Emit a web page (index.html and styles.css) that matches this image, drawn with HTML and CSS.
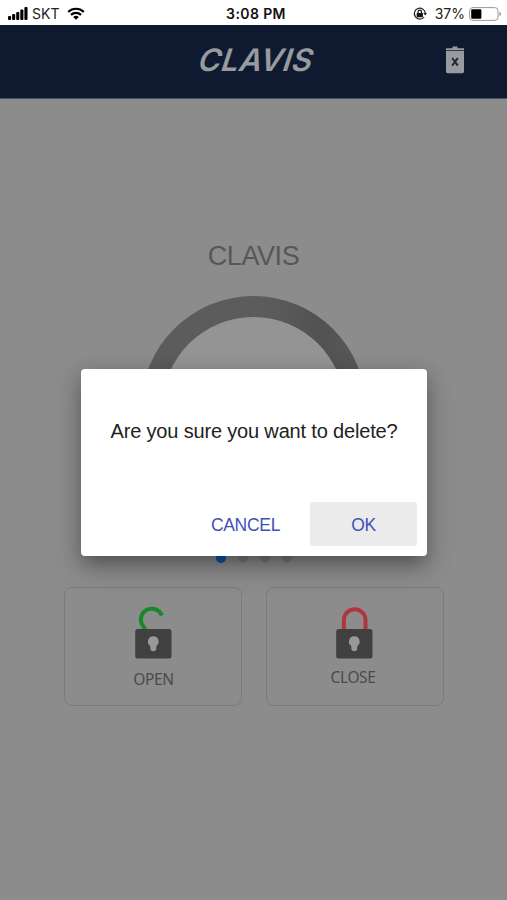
FILE: index.html
```
<!DOCTYPE html>
<html lang="en">
<head>
    <meta charset="UTF-8">
    <meta name="viewport" content="width=device-width, initial-scale=1.0">
    <title>CLAVIS</title>
    <link rel="stylesheet" href="styles.css">
</head>
<body>
    <!-- Status bar -->
    <div class="status">
        <div class="status-left">
            <svg width="20" height="13" viewBox="0 0 20 13">
                <rect x="0" y="9" width="3.1" height="4" rx="1"/>
                <rect x="4.1" y="7" width="3.1" height="6" rx="1"/>
                <rect x="8.2" y="5" width="3.1" height="8" rx="1"/>
                <rect x="12.3" y="2.5" width="3.1" height="10.5" rx="1"/>
                <rect x="16.4" y="0" width="3.1" height="13" rx="1"/>
            </svg>
            <span class="carrier">SKT</span>
            <svg width="18" height="13" viewBox="0 0 18 13">
                <path d="M1.2 4.9a11.2 11.2 0 0 1 15.6 0M4 7.9a7.2 7.2 0 0 1 10 0" fill="none" stroke="#000" stroke-width="2.2"/>
                <path d="M9 12.8L6.2 10a4 4 0 0 1 5.6 0z"/>
            </svg>
        </div>
        <div class="time">3:08 PM</div>
        <div class="status-right">
            <svg width="14" height="14" viewBox="0 0 14 14">
                <path d="M11.2 10A5.5 5.5 0 1 1 12.3 6" fill="none" stroke="#222" stroke-width="1.2"/>
                <path d="M10.2 6h3.8l-1.8 2.6z" fill="#222"/>
                <rect x="3.7" y="6" width="6.2" height="4.3" rx=".5" fill="#111"/>
                <path d="M5.1 6V4.8a1.7 1.7 0 0 1 3.4 0V6" fill="none" stroke="#111" stroke-width="1.2"/>
            </svg>
            <span class="percent">37%</span>
            <svg width="33" height="14" viewBox="0 0 33 14">
                <rect x=".6" y=".6" width="28.4" height="12.8" rx="3.2" fill="none" stroke="#999" stroke-width="1"/>
                <rect x="2.2" y="2.2" width="10.2" height="9.6" rx="1.2"/>
                <path d="M30.4 4.8q1.6.6 1.6 2.2t-1.6 2.2z" fill="#999"/>
            </svg>
        </div>
    </div>

    <header class="header">
        <span class="logo">CLAVIS</span>
        <svg class="trash" width="20" height="28" viewBox="0 0 20 28">
            <path d="M7.5 2.2V.5h5v1.7H19v2.1H1V2.2z" fill="#979a9e"/>
            <path d="M1 4.9h18v20.7a1.6 1.6 0 0 1-1.6 1.6H2.6A1.6 1.6 0 0 1 1 25.6z" fill="#979a9e"/>
            <path d="M7.2 12l5.6 7.6M12.8 12l-5.6 7.6" stroke="#222832" stroke-width="2"/>
        </svg>
    </header>

    <main class="content">
        <h1 class="device">CLAVIS</h1>
        <div class="ring"></div>
        <div class="dots">
            <span class="dot active"></span>
            <span class="dot"></span>
            <span class="dot"></span>
            <span class="dot"></span>
        </div>
        <div class="cards">
            <div class="card open">
                <svg width="38" height="54" viewBox="0 0 38 54">
                    <path d="M12.2 26L7.6 18.6A10.8 10.8 0 1 1 27.9 10.6" fill="none" stroke="#17882c" stroke-width="4"/>
                    <rect x="1.2" y="24" width="36.3" height="29.5" rx="2.5" fill="#404040"/>
                    <path d="M19.3 31.3a5.3 5.3 0 0 1 3 9.7v2.3a3 3 0 0 1-6 0V41a5.3 5.3 0 0 1 3-9.7z" fill="#999"/>
                </svg>
                <span class="label">OPEN</span>
            </div>
            <div class="card close">
                <svg width="38" height="54" viewBox="0 0 38 54">
                    <path d="M7.9 25V15a10.8 10.8 0 0 1 21.6 0V25" fill="none" stroke="#b0353f" stroke-width="4"/>
                    <rect x=".2" y="24" width="36.3" height="29.5" rx="2.5" fill="#404040"/>
                    <path d="M18.3 31.3a5.3 5.3 0 0 1 3 9.7v2.3a3 3 0 0 1-6 0V41a5.3 5.3 0 0 1 3-9.7z" fill="#999"/>
                </svg>
                <span class="label">CLOSE</span>
            </div>
        </div>
    </main>

    <!-- Confirm dialog -->
    <div class="dialog">
        <p class="message">Are you sure you want to delete?</p>
        <div class="actions">
            <button class="btn">CANCEL</button>
            <button class="btn ok">OK</button>
        </div>
    </div>
</body>
</html>
```

FILE: styles.css
```
* {
    box-sizing: border-box;
}

body {
    margin: 0;
    height: 900px;
    overflow: hidden;
    position: relative;
    font-family: "Liberation Sans", Arial, sans-serif;
    background: #8c8c8c;
}

svg {
    display: block;
    flex: none;
    overflow: visible;
}

.status {
    display: flex;
    align-items: center;
    height: 25px;
    padding: 2px 5px 0 8px;
    background: #fff;
    font-family: Inter, sans-serif;
    font-size: 14px;
    color: #222;
}

.status-left,
.status-right {
    display: flex;
    flex: 1;
    align-items: center;
}

.status-right {
    justify-content: flex-end;
}

.carrier {
    margin: 0 8px 0 4px;
}

.time {
    padding-left: 2px;
    font-weight: 600;
    letter-spacing: 0.4px;
    color: #111;
}

.percent {
    margin: 0 4px 0 8px;
}

.header {
    display: grid;
    grid-template-columns: 1fr auto 1fr;
    align-items: center;
    height: 74px;
    padding: 0 42px 4px 48px;
    background: #0f1930;
    border-bottom: 1px solid #4a505f;
}

.logo {
    grid-column: 2;
    font-family: Inter, sans-serif;
    font-size: 31px;
    font-weight: 600;
    font-style: italic;
    line-height: 36px;
    letter-spacing: 0.4px;
    color: #979a9e;
    transform: skewX(-9deg);
}

.trash {
    justify-self: end;
}

.content {
    display: flex;
    flex-direction: column;
    align-items: center;
}

.device {
    margin: 141px 0 0;
    font-size: 27px;
    font-weight: normal;
    line-height: 32px;
    letter-spacing: -0.4px;
    color: #575757;
}

/* inner disc on the padding box, ring shading on the border box */
.ring {
    width: 225px;
    height: 225px;
    margin-top: 24px;
    border: 21px solid transparent;
    border-radius: 50%;
    background:
        linear-gradient(#949494, #949494) padding-box,
        linear-gradient(90deg, #5c5c5c 55%, #525252 80%, #5a5a5a) border-box;
}

.dots {
    display: flex;
    gap: 12px;
    margin-top: 32px;
}

.dot {
    width: 10px;
    height: 10px;
    border-radius: 50%;
    background: #7c7c7c;
}

.dot.active {
    background: #0857a8;
}

.cards {
    display: flex;
    gap: 24px;
    margin-top: 24px;
}

.card {
    display: flex;
    flex-direction: column;
    align-items: center;
    width: 178px;
    height: 119px;
    padding-top: 17px;
    border: 1.5px solid #7b7b7b;
    border-radius: 8px;
}

.label {
    font-family: "Noto Sans", sans-serif;
    font-size: 15.5px;
    line-height: 22px;
    letter-spacing: -0.4px;
    color: #4a4a4a;
}

.open .label {
    margin: 9px 0 0 2px;
}

.close .label {
    margin: 7px 3px 0 0;
}

.dialog {
    position: absolute;
    left: 81px;
    top: 369px;
    display: flex;
    flex-direction: column;
    justify-content: space-between;
    width: 346px;
    height: 187px;
    padding: 50px 10px 10px;
    border-radius: 4px;
    background: #fff;
    box-shadow: 0 11px 15px -7px rgba(0, 0, 0, 0.2), 0 12px 28px 3px rgba(0, 0, 0, 0.16), 0 6px 18px 2px rgba(0, 0, 0, 0.14);
}

.message {
    margin: 0;
    font-size: 20px;
    line-height: 24px;
    letter-spacing: -0.17px;
    text-align: center;
    white-space: nowrap;
    color: #222;
}

.actions {
    display: flex;
    justify-content: flex-end;
    gap: 11px;
}

.btn {
    width: 107px;
    height: 44px;
    padding: 2px 0 0;
    border: none;
    background: none;
    font-family: inherit;
    font-size: 17.5px;
    letter-spacing: -0.3px;
    color: #3f51b5;
}

.ok {
    border-radius: 2px;
    background: #ebebeb;
}
```
